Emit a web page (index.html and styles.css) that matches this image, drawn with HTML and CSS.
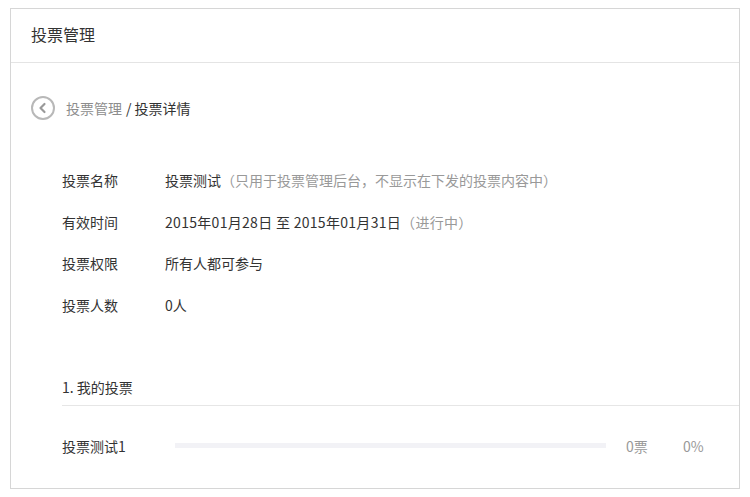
FILE: index.html
```html
<!DOCTYPE html>
<html lang="zh-CN">
<head>
    <meta charset="UTF-8" />
    <meta name="viewport" content="width=device-width, initial-scale=1.0" />
    <title>投票管理</title>
    <link rel="stylesheet" href="styles.css">
</head>
<body>
    <div class="panel">
        <div class="panel-header">投票管理</div>
        <div class="panel-body">
            <div class="crumbs">
                <a class="back" href="#">
                    <svg width="24" height="24" viewBox="0 0 24 24">
                        <circle cx="12" cy="12" r="11" fill="none" stroke="#b8b8b8" stroke-width="2" />
                        <path d="M13.5 8 L9.5 12 L13.5 16" fill="none" stroke="#999" stroke-width="2.2" stroke-linecap="round" stroke-linejoin="round" />
                    </svg>
                </a>
                <span class="crumb-link">投票管理</span>
                <span class="crumb-current">/ 投票详情</span>
            </div>

            <ul class="info">
                <li>
                    <span class="info-label">投票名称</span>
                    <span class="info-value">投票测试<span class="muted">（只用于投票管理后台，不显示在下发的投票内容中）</span></span>
                </li>
                <li>
                    <span class="info-label">有效时间</span>
                    <span class="info-value date">2015年01月28日 至 2015年01月31日<span class="muted">（进行中）</span></span>
                </li>
                <li>
                    <span class="info-label">投票权限</span>
                    <span class="info-value">所有人都可参与</span>
                </li>
                <li>
                    <span class="info-label">投票人数</span>
                    <span class="info-value">0人</span>
                </li>
            </ul>

            <div class="question">
                <h3 class="question-title">1. 我的投票</h3>
                <div class="option">
                    <span class="option-name">投票测试1</span>
                    <div class="option-bar"><div class="option-fill" style="width: 0%"></div></div>
                    <span class="option-count">0票</span>
                    <span class="option-percent">0%</span>
                </div>
            </div>
        </div>
    </div>
</body>
</html>
```

FILE: styles.css
```css
body {
    font-family: "Noto Sans CJK SC", "Liberation Sans", sans-serif;
    font-size: 14px;
    color: #333;
    background: #fff;
    margin: 0;
    padding: 8px 10px 0;
}
.panel {
    width: 730px;
    height: 481px;
    box-sizing: border-box;
    border: 1px solid #d6d6d6;
    background: #fff;
}
.panel-header {
    height: 53px;
    line-height: 51px;
    padding-left: 20px;
    font-size: 16px;
    color: #333;
    border-bottom: 1px solid #e4e4e4;
}
.crumbs {
    display: flex;
    align-items: center;
    height: 24px;
    margin: 33px 0 0 20px;
}
.back {
    display: flex;
    width: 24px;
    height: 24px;
    margin-right: 11px;
}
.crumb-link {
    color: #8d8d8d;
}
.crumb-current {
    color: #333;
    margin-left: 4px;
}
.info {
    list-style: none;
    margin: 39px 0 0;
    padding: 0 0 0 51px;
}
.info li {
    display: flex;
    height: 41.7px;
    align-items: center;
}
.info-label {
    width: 103px;
}
.date {
    letter-spacing: 0.3px;
}
.muted {
    color: #999;
}
.question {
    margin-top: 51px;
    padding-left: 51px;
}
.question-title {
    font-size: 14px;
    font-weight: normal;
    margin: 0;
    line-height: 20px;
    padding-bottom: 8px;
    border-bottom: 1px solid #e6e6e6;
}
.option {
    display: flex;
    align-items: center;
    height: 20px;
    margin-top: 30px;
}
.option-name {
    width: 113px;
}
.option-bar {
    width: 431px;
    height: 5px;
    background: #f2f2f6;
    margin-right: 20px;
}
.option-fill {
    height: 100%;
    background: #44b549;
}
.option-count {
    width: 57px;
    color: #999;
}
.option-percent {
    color: #999;
}
```
